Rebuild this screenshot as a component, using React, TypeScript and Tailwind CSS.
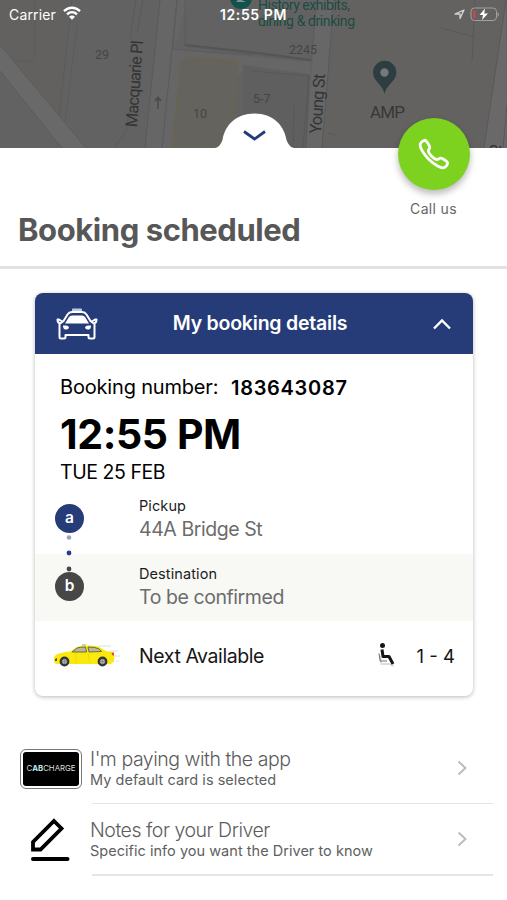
import type { ReactNode } from 'react'
import { IoCallOutline } from 'react-icons/io5'

function MapBackdrop() {
  return (
    <svg className="block h-[148px] w-full" viewBox="0 0 507 148" aria-hidden>
      <rect width="507" height="148" fill="#626262" />
      <path d="M0 0H72L62 118L0 45Z" fill="#636160" />
      <path d="M333 0H507V148H322Z" fill="#646261" />
      <path d="M0 45L86 148H62L0 71Z" fill="#696969" />
      <path d="M0 45L86 148M0 71L62 148" stroke="#5c5c5c" fill="none" />
      <path d="M72 0L59 115M77 25L65 122M35 0V58M15 60L34 62" stroke="#5c5c5c" fill="none" />
      <path d="M160 0H187L174 50L310 62V75L245 68L172 148H145Z" fill="#666" />
      <path d="M160 0L145 148M177 0L162 148M143 0L137 33M136 0L130 38M115 146L126 132L129 112" stroke="#5a5a5a" fill="none" />
      <path d="M177 0L173 49L253 55M185 0V46L311 61L317 0" stroke="#5c5c5c" fill="none" />
      <path d="M185 45L250 52L311 60" stroke="#555" strokeWidth="2" fill="none" />
      <path d="M187 57L238 61L232 148H172L181 62Z" fill="#65635d" stroke="#6c6549" />
      <path d="M243 65L309 74L305 148H243Z" fill="#5f5f5f" />
      <path d="M252 71L309 76L303 148M294 106L293 148" stroke="#585858" fill="none" />
      <path d="M317 0H335L322 148H306Z" fill="#676767" />
      <path d="M334 0L322 148M309 75L306 148" stroke="#585858" fill="none" />
      <path d="M441 28L475 37M475 0L472 60M328 133L335 135" stroke="#585858" fill="none" />
      <path d="M506 0L484 148H507Z" fill="#696969" />
      <path d="M506 0L484 148M507 105L503 148" stroke="#595959" fill="none" />
      <path d="M158 109V98M155 101L158 97.500L161 101" stroke="#4a4a4c" strokeWidth="1.500" fill="none" />
      <circle cx="241" cy="-2" r="11" fill="#14514d" />
      <path d="M236 2L239 -1L246 2Z" fill="#7b9391" />
      <path d="M384.500 94C383 85 373 81 373 72.500A11.700 11.700 0 0 1 396.400 72.500C396.400 81 386 85 384.500 94Z" fill="#2d3d42" />
      <circle cx="384.500" cy="72.500" r="4.200" fill="#74797b" />
      <g fill="#3e3e3e" fontFamily="Roboto, sans-serif">
        <g fill="#454545" fontSize="12.500">
          <text x="95" y="59">29</text>
          <text x="193" y="118">10</text>
          <text x="253" y="103">5-7</text>
          <text x="289" y="54">2245</text>
        </g>
        <text transform="translate(137 127.500) rotate(-86)" fontSize="16.500" fill="#343434" textLength="87">Macquarie Pl</text>
        <text transform="translate(321 134) rotate(-86)" fontSize="16.500" fill="#343434" textLength="60">Young St</text>
        <text x="370" y="118" fontSize="17" fill="#373737" textLength="35">AMP</text>
        <text x="489" y="156" fontSize="15" fill="#303030">St</text>
      </g>
      <g fill="#1c4b43" fontFamily="Roboto, sans-serif" fontSize="14">
        <text x="258" y="10" textLength="92">History exhibits,</text>
        <text x="258" y="26" textLength="97">dining &amp; drinking</text>
      </g>
    </svg>
  )
}

function StatusBar() {
  return (
    <div className="absolute inset-x-0 top-0 flex h-7 items-center justify-between pr-[7px] pl-[9px] text-white">
      <div className="flex w-[90px] items-center gap-[7px]">
        <span className="text-[14px] tracking-[0.15px]">Carrier</span>
        <svg className="mb-0.5 h-[14px] w-[18px]" viewBox="0 0 18 14" fill="none" stroke="currentColor" strokeWidth="2.400" aria-hidden>
          <path d="M1 5.200C5.600 .6 12.400 .6 17 5.200M4 8.300C7 5.500 11 5.500 14 8.300" />
          <path d="M6 10.800C7.800 9.200 10.200 9.200 12 10.800L9 13.800Z" fill="currentColor" stroke="none" />
        </svg>
      </div>
      <span className="mr-[2px] text-[14px] font-semibold tracking-[0.6px]">12:55 PM</span>
      <div className="flex w-[90px] items-center justify-end gap-[5px]">
        <svg className="size-[11px]" viewBox="0 0 11 11" fill="none" stroke="#d2d2d2" strokeWidth="1.300" strokeLinejoin="round" aria-hidden>
          <path d="M10 1L6 9.500V5H1Z" />
        </svg>
        <svg className="mr-px h-[15px] w-[29px]" viewBox="0 0 29 15" fill="none" aria-hidden>
          <rect x="1" y="1" width="25.500" height="12.500" rx="3.500" stroke="#a0a0a0" />
          <path d="M27.500 5V10C29.300 9 29.300 6 27.500 5Z" fill="#a0a0a0" />
          <rect x="3" y="3" width="2.500" height="8.500" rx="1" fill="#c4494d" />
          <path d="M15 1.500L9.500 8H13L12 13L18 6.500H14.300Z" fill="#fff" />
        </svg>
      </div>
    </div>
  )
}

function TaxiFrontIcon() {
  return (
    <svg className="h-[32px] w-[42px]" viewBox="0 0 42 32" fill="none" stroke="#fff" strokeWidth="2" strokeLinejoin="round" aria-hidden>
      <path d="M17 3V1.500H25V3" fill="#b9c9e8" stroke="#b9c9e8" />
      <path d="M7.500 13L11.500 6.500Q13 4.200 16 4H26Q29 4.200 30.500 6.500L34.500 13L38.500 16V29Q38.500 30.500 37 30.500H34Q32.500 30.500 32.500 29V27H9.500V29Q9.500 30.500 8 30.500H5Q3.500 30.500 3.500 29V16Z" />
      <path d="M9 15.500L13 9Q14 7.500 16 7.500H26Q28 7.500 29 9L33 15.500Z" fill="#fff" stroke="none" />
      <path d="M7 14L3 11.500H1.500Q1.500 15 4 15M35 14L39 11.500H40.500Q40.500 15 38 15" />
      <path d="M7 17.500H10Q12.500 17.500 13 19.500Q12.500 21.500 10.500 21.500H9Q7 21 7 17.500ZM35 17.500H32Q29.500 17.500 29 19.500Q29.500 21.500 31.500 21.500H33Q35 21 35 17.500Z" fill="#fff" stroke="none" />
    </svg>
  )
}

function YellowCab() {
  return (
    <svg className="h-[24px] w-[68px]" viewBox="0 0 68 24" aria-hidden>
      <path d="M45 2H58M56 7H65M62 12H67M63 17H66" stroke="#dedede" />
      <path d="M29 1.500H33V.5H29Z" fill="#a79b43" />
      <path d="M1 17Q0 11 6 9.500Q12 7.500 18 7.200L23 3.500Q27 1.600 34 1.600Q43 1.500 48 4L53 7L60 8.500Q62 11 61 17.500L58 20H5Q1 20 1 17Z" fill="#fbe90d" />
      <path d="M19 8L24 4Q27 3 32.500 3L33.500 8ZM35 3Q42 2.800 46 4.800L48.500 7.500L36 8Z" fill="#b9b7a0" stroke="#59562f" strokeWidth=".8" />
      <path d="M18 8L20 8.500M23 9V19M35 9L37 19" stroke="#e3d312" strokeWidth=".7" />
      <path d="M2 15L4 14V17H2Z" fill="#5d5929" />
      <path d="M58.500 8.500H61V12L59 11Z" fill="#e2572c" />
      <g fill="#b5b5b5" stroke="#343434" strokeWidth="2.400">
        <circle cx="11.500" cy="17.500" r="3.700" />
        <circle cx="49.500" cy="17.500" r="3.700" />
      </g>
      <path d="M8.500 17.500H14.500M11.500 14.500V20.500M46.500 17.500H52.500M49.500 14.500V20.500" stroke="#777" strokeWidth=".6" />
    </svg>
  )
}

function SeatIcon() {
  return (
    <svg className="h-[26px] w-[20px]" viewBox="0 0 20 26" fill="none" aria-hidden>
      <path d="M4 14L5.500 22H13L18 24" stroke="#dedede" strokeWidth="2" />
      <circle cx="6.500" cy="3.500" r="2.500" fill="#161616" />
      <path d="M6 7.500L7 14.500H13L17 22" stroke="#161616" strokeWidth="3" strokeLinejoin="round" />
      <path d="M3 11.500L4.300 19H11" stroke="#777" strokeWidth="1.200" />
    </svg>
  )
}

function PencilIcon() {
  return (
    <svg className="h-[44px] w-[40px]" viewBox="0 0 40 44" fill="none" stroke="#000" aria-hidden>
      <path d="M24 3L31.500 10.500L10.500 31.500H3V24Z" strokeWidth="3.800" />
      <path d="M3 41H37.500" strokeWidth="4" strokeLinecap="round" />
    </svg>
  )
}

interface StopProps {
  letter: string
  label: string
  value: string
  badgeClass: string
  className: string
}

function Stop({ letter, label, value, badgeClass, className }: StopProps) {
  return (
    <div className={`flex pl-5 ${className}`}>
      <div className={`flex size-[29px] items-center justify-center rounded-full pb-px text-[15.500px] font-semibold text-white ${badgeClass}`}>
        {letter}
      </div>
      <div className="ml-[55px]">
        <p className="text-[14.500px] leading-5 tracking-[0.1px] text-[#1c1c1c]">{label}</p>
        <p className="mt-px text-[19.500px] leading-6 tracking-[-0.43px] text-[#6c6c6c]">{value}</p>
      </div>
    </div>
  )
}

interface OptionRowProps {
  icon: ReactNode
  title: string
  subtitle: string
  className: string
}

function OptionRow({ icon, title, subtitle, className }: OptionRowProps) {
  return (
    <div className="flex h-[71px] pl-5">
      <div className="flex w-[62px] items-center justify-center">{icon}</div>
      <div className="ml-2 w-[411px]">
        <div className="flex h-[70px] items-center justify-between pr-[34px]">
          <div className="pt-px">
            <p className="text-[19.500px] leading-[22px] font-light tracking-[-0.47px] text-[#5c5c5c]">{title}</p>
            <p className="text-[14.500px] leading-[20px] tracking-[0.03px] text-[#606060]">{subtitle}</p>
          </div>
          <svg className="h-4 w-[10px]" viewBox="0 0 10 16" fill="none" stroke="#bcbcbc" strokeWidth="2" aria-hidden>
            <path d="M1.500 1.500L8.500 8L1.500 14.500" />
          </svg>
        </div>
        <div className={`mr-2 ml-0.5 ${className}`} />
      </div>
    </div>
  )
}

export default function App() {
  return (
    <div className="h-[900px] w-[507px] overflow-hidden bg-white font-['Inter',sans-serif] whitespace-nowrap">
      <header className="relative h-[148px]">
        <MapBackdrop />
        <StatusBar />
        <svg className="absolute top-[113px] left-[215px] h-[36px] w-[79px]" viewBox="0 0 79 36" fill="none" aria-hidden>
          <path d="M0 36V35Q5 34 7.500 27C10 12 21 .5 39.500 .5S69 12 71.500 27Q74 34 79 35V36Z" fill="#fff" />
          <path d="M29 18.500L39.500 26L50 18.500" stroke="#253c7a" strokeWidth="2.800" />
        </svg>
        <div className="absolute top-[118px] left-[398px] flex size-[72px] items-center justify-center rounded-full bg-[#7dd220] text-white shadow-[0_4px_7px_rgba(0,0,0,0.28)]">
          <IoCallOutline className="size-[34px] stroke-[1.2] [&_path]:[stroke-width:42px]" />
        </div>
      </header>

      <section className="h-[121px] border-b-[3px] border-[#e2e2e2]">
        <p className="h-[72px] pt-[51px] pr-[50px] text-right text-[14px] leading-5 tracking-[0.35px] text-[#666]">Call us</p>
        <h1 className="-mt-[10px] pl-[18px] text-[31px] leading-10 font-bold tracking-[-0.43px] text-[#575757]">Booking scheduled</h1>
      </section>

      <main className="relative mt-6 ml-[35px] h-[403px] w-[438px] rounded-lg bg-white shadow-[0_1px_4px_rgba(0,0,0,0.28)]">
        <div className="flex h-[61px] items-center justify-between rounded-t-lg bg-[#263c79] pr-[21px] pl-[21px] text-white">
          <TaxiFrontIcon />
          <h2 className="mr-[10px] pt-px text-[19.500px] font-semibold tracking-[-0.22px]">My booking details</h2>
          <svg className="h-[12px] w-[20px]" viewBox="0 0 20 12" fill="none" stroke="#fff" strokeWidth="2.400" aria-hidden>
            <path d="M2 10.500L10 2.500L18 10.500" />
          </svg>
        </div>
        <div className="h-[130px] pt-[13px] pl-[25px] text-black">
          <div className="flex h-10 items-center text-[20px]">
            <span className="w-[171px] tracking-[-0.18px]">Booking number:</span>
            <strong className="pt-px font-semibold tracking-[0.7px]">183643087</strong>
          </div>
          <p className="mt-[3px] text-[41px] leading-[48px] font-bold tracking-[-0.4px]">12:55 PM</p>
          <p className="mt-[2px] text-[19.500px] leading-6 tracking-[-0.45px]">TUE 25 FEB</p>
        </div>
        <Stop letter="a" label="Pickup" value="44A Bridge St" badgeClass="mt-[8px] bg-[#263c79]" className="h-[70px] pt-[12px]" />
        <Stop letter="b" label="Destination" value="To be confirmed" badgeClass="mt-[8px] bg-[#474747]" className="h-[67px] bg-[#f8f8f5] pt-[10px]" />
        <svg className="absolute top-[240px] left-[31px] h-[40px] w-[6px]" viewBox="0 0 6 40" aria-hidden>
          <circle cx="3" cy="4.500" r="2.300" fill="#98a3c4" />
          <circle cx="3" cy="20" r="2.400" fill="#263c8a" />
          <circle cx="3" cy="36" r="2.400" fill="#474747" />
        </svg>
        <div className="flex h-[70px] items-center pr-[18px] pl-[18px] text-[19.500px] text-[#161616]">
          <YellowCab />
          <span className="ml-[18px] pt-[2px] tracking-[-0.42px]">Next Available</span>
          <span className="mb-[2px] ml-auto">
            <SeatIcon />
          </span>
          <span className="ml-[21px] pt-[2px] text-[18.500px]">1 - 4</span>
        </div>
      </main>

      <section className="mt-[37px]">
        <OptionRow
          icon={
            <div className="h-[40px] w-[62px] rounded-[6px] border border-[#777] bg-white p-[2px]">
              <div className="flex h-full items-center justify-center rounded-[3px] bg-black text-[7.800px] text-[#ddd]">
                <span>C<b className="text-[#bfe9e4]">AB</b>CHARGE</span>
              </div>
            </div>
          }
          title="I'm paying with the app"
          subtitle="My default card is selected"
          className="h-px bg-[#e5e5e5]"
        />
        <OptionRow
          icon={<div className="mr-[2px]"><PencilIcon /></div>}
          title="Notes for your Driver"
          subtitle="Specific info you want the Driver to know"
          className="h-[2px] bg-[#e5e5e5]"
        />
      </section>
    </div>
  )
}
